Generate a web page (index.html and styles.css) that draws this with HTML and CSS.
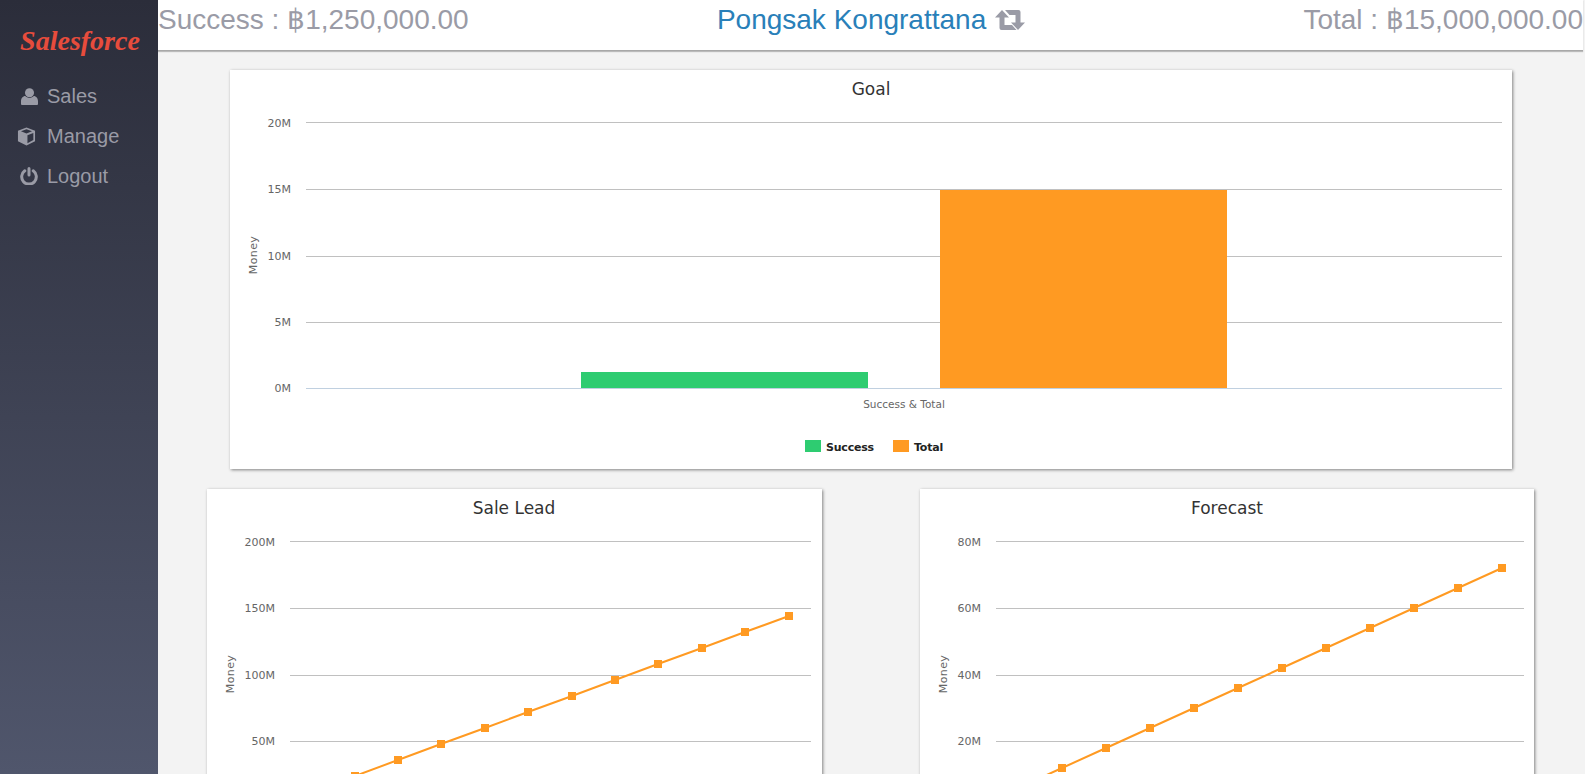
FILE: index.html
```html
<!DOCTYPE html>
<html lang="en">
<head>
<meta charset="utf-8">
<title>Salesforce</title>
<link rel="stylesheet" href="styles.css">
</head>
<body>
<div class="app">
  <aside class="sidebar">
    <div class="logo">Salesforce</div>
    <nav class="nav">
      <a class="nav-item"><span class="nav-icon"><svg class="icon-user" width="17" height="17" viewBox="0 0 18 18"><circle cx="9" cy="5" r="4.800"/><path d="M1 18a1 1 0 0 1-1-1v-3c0-3 2-5.500 4.500-5.500 1 1.200 2.700 2 4.500 2s3.500-.8 4.500-2c2.500 0 4.500 2.500 4.500 5.500v3a1 1 0 0 1-1 1z"/></svg></span>Sales</a>
      <a class="nav-item"><span class="nav-icon"><svg class="icon-cube" width="19" height="19" viewBox="0 0 20 20"><path d="M10 .5 1 4v11l9 4.500 9-4.500V4zM10 2.400 15.800 4.600 10 6.900 4.200 4.600zM11 8.700l6.200-2.400v7.500L11 17z"/></svg></span>Manage</a>
      <a class="nav-item"><span class="nav-icon"><svg class="icon-power" width="18" height="18" viewBox="0 0 18 18"><path class="stroke-icon" d="M4.800 3.800a7.300 7.300 0 1 0 8.400 0M9 1.500v6.500"/></svg></span>Logout</a>
    </nav>
  </aside>
  <main class="main">
    <header class="topbar">
      <span class="stat">Success : ฿1,250,000.00</span>
      <span class="person"><span class="person-name">Pongsak Kongrattana</span><svg class="swap" width="30" height="20" viewBox="0 0 30 20"><path d="M7 0 14 7.500H9.500V15H17L21.500 20H6.500A2 2 0 0 1 4.500 18V7.500H0ZM10 0H23.500A2 2 0 0 1 25.500 2V12.500H30L23 20 16 12.500H20.500V5H14.500Z"/></svg></span>
      <span class="stat">Total : ฿15,000,000.00</span>
    </header>
    <div class="content">
      <section class="card card-wide">
        <svg class="chart" width="1282" height="399" viewBox="0 0 1282 399">
          <text class="chart-title" x="641" y="25">Goal</text>
          <g class="grid">
            <path d="M76 52.500H1272M76 119.500H1272M76 186.500H1272M76 252.500H1272"/>
          </g>
          <path class="axis" d="M76 318.500H1272"/>
          <rect class="bar-green" x="351" y="302" width="287" height="16"/>
          <rect class="bar-orange" x="710" y="120" width="287" height="198"/>
          <g class="tick">
            <text x="61" y="57">20M</text>
            <text x="61" y="123">15M</text>
            <text x="61" y="190">10M</text>
            <text x="61" y="256">5M</text>
            <text x="61" y="322">0M</text>
          </g>
          <text class="axis-title" transform="translate(27 185) rotate(-90)">Money</text>
          <text class="x-label" x="674" y="338">Success &amp; Total</text>
          <rect class="bar-green" x="575" y="370" width="16" height="12"/>
          <text class="legend" x="596" y="381">Success</text>
          <rect class="bar-orange" x="663" y="370" width="16" height="12"/>
          <text class="legend" x="684" y="381">Total</text>
        </svg>
      </section>
      <div class="chart-row">
        <section class="card">
          <svg class="chart" width="615" height="400" viewBox="0 0 615 400">
            <text class="chart-title" x="307" y="25">Sale Lead</text>
            <g class="grid"><path d="M83 52.500H604M83 119.500H604M83 186.500H604M83 252.500H604"/></g>
            <g class="tick">
              <text x="68" y="57">200M</text>
              <text x="68" y="123">150M</text>
              <text x="68" y="190">100M</text>
              <text x="68" y="256">50M</text>
            </g>
            <text class="axis-title" transform="translate(27 185) rotate(-90)">Money</text>
            <polyline class="series" points="104,303 148,287 191,271 234,255 278,239 321,223 365,207 408,191 451,175 495,159 538,143 582,127"/>
            <g class="markers">
              <rect x="100" y="299" width="8" height="8"/><rect x="144" y="283" width="8" height="8"/><rect x="187" y="267" width="8" height="8"/><rect x="230" y="251" width="8" height="8"/><rect x="274" y="235" width="8" height="8"/><rect x="317" y="219" width="8" height="8"/><rect x="361" y="203" width="8" height="8"/><rect x="404" y="187" width="8" height="8"/><rect x="447" y="171" width="8" height="8"/><rect x="491" y="155" width="8" height="8"/><rect x="534" y="139" width="8" height="8"/><rect x="578" y="123" width="8" height="8"/>
            </g>
          </svg>
        </section>
        <section class="card">
          <svg class="chart" width="614" height="400" viewBox="0 0 614 400">
            <text class="chart-title" x="307" y="25">Forecast</text>
            <g class="grid"><path d="M76 52.500H604M76 119.500H604M76 186.500H604M76 252.500H604"/></g>
            <g class="tick">
              <text x="61" y="57">80M</text>
              <text x="61" y="123">60M</text>
              <text x="61" y="190">40M</text>
              <text x="61" y="256">20M</text>
            </g>
            <text class="axis-title" transform="translate(27 185) rotate(-90)">Money</text>
            <polyline class="series" points="98,299 142,279 186,259 230,239 274,219 318,199 362,179 406,159 450,139 494,119 538,99 582,79"/>
            <g class="markers">
              <rect x="94" y="295" width="8" height="8"/><rect x="138" y="275" width="8" height="8"/><rect x="182" y="255" width="8" height="8"/><rect x="226" y="235" width="8" height="8"/><rect x="270" y="215" width="8" height="8"/><rect x="314" y="195" width="8" height="8"/><rect x="358" y="175" width="8" height="8"/><rect x="402" y="155" width="8" height="8"/><rect x="446" y="135" width="8" height="8"/><rect x="490" y="115" width="8" height="8"/><rect x="534" y="95" width="8" height="8"/><rect x="578" y="75" width="8" height="8"/>
            </g>
          </svg>
        </section>
      </div>
    </div>
  </main>
</div>
</body>
</html>
```
FILE: styles.css
```css
* { box-sizing: border-box; }
html, body { margin: 0; height: 100%; overflow: hidden; }
body { font-family: "Liberation Sans", Arial, sans-serif; background: #f3f3f3; }
.app { display: flex; height: 774px; }
.sidebar {
  width: 158px; flex: none; height: 774px;
  background: linear-gradient(180deg, #2b2d3a 0%, #50566c 100%);
}
.logo {
  font-family: "Liberation Serif", serif; font-weight: 700; font-style: italic;
  font-size: 28px; color: #e74c3c; text-align: center;
  padding-top: 24px; padding-left: 2px; height: 76px; line-height: 34px;
}
.nav { display: flex; flex-direction: column; }
.nav-item {
  display: flex; align-items: center; height: 40px;
  font-size: 20px; color: #9a9ba6;
}
.nav-icon { width: 47px; display: flex; flex: none; }
.nav-icon svg { fill: #9a9ba6; display: block; }
.icon-user { margin-left: 21px; }
.icon-cube { margin-left: 17px; }
.icon-power { margin-left: 20px; }
.stroke-icon { fill: none; stroke: #9a9ba6; stroke-width: 3; stroke-linecap: round; }
.main { flex: 1; min-width: 0; height: 774px; overflow: hidden; display: flex; flex-direction: column; }
.topbar {
  flex: none; height: 51px; margin-right: 2px; background: #fff;
  border-bottom: 1px solid #a8a8a8; box-shadow: 0 1px 1px #bbb;
  display: flex; justify-content: space-between; align-items: flex-start;
  font-size: 28px; line-height: 40px; color: #9a9ba6;
}
.person { display: flex; align-items: center; gap: 9px; margin-left: -30px; }
.person-name { color: #2980b9; }
.swap { fill: #9a9ba6; display: block; }
.content { flex: 1; padding: 19px 51px 0 49px; }
.card { background: #fff; box-shadow: 1px 1px 3px #808080; }
.card-wide { width: 1282px; height: 399px; margin-left: 23px; }
.chart-row { display: grid; grid-template-columns: 615px 614px; column-gap: 98px; margin-top: 20px; }
.chart-row .card { height: 400px; }
.chart { display: block; font-family: "DejaVu Sans", sans-serif; }
.chart-title { font-size: 17px; fill: #333; text-anchor: middle; }
.grid path { stroke: #c0c0c0; stroke-width: 1; fill: none; }
.axis { stroke: #c0d0e0; stroke-width: 1; fill: none; }
.tick text { font-size: 11px; fill: #666; text-anchor: end; }
.axis-title { font-size: 11px; letter-spacing: .4px; fill: #666; text-anchor: middle; }
.x-label { font-size: 10.500px; fill: #666; text-anchor: middle; }
.legend { font-size: 11px; letter-spacing: -.2px; font-weight: 700; fill: #222; }
.bar-green { fill: #2ecc71; }
.bar-orange { fill: #ff9a22; }
.series { fill: none; stroke: #ff9a22; stroke-width: 2; }
.markers rect { fill: #ff9a22; }
```
